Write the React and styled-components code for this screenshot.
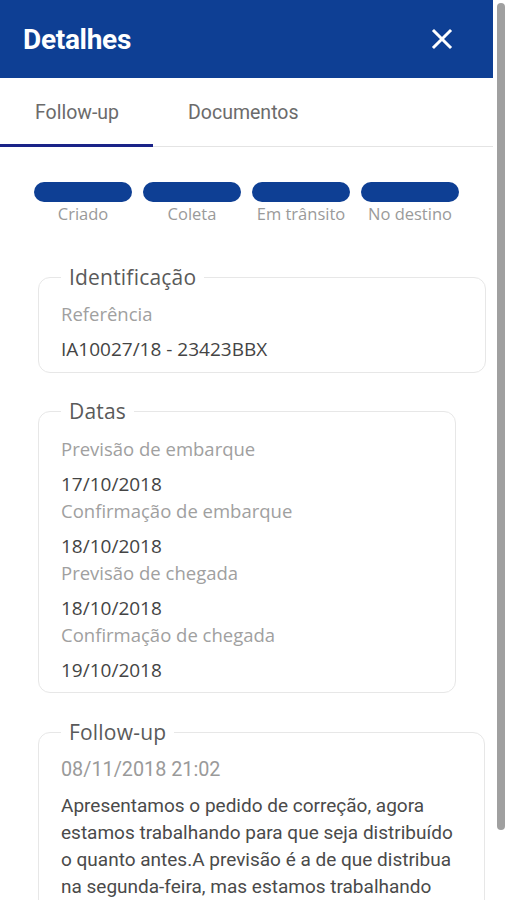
import styled, { createGlobalStyle } from 'styled-components'

// cores da tela de detalhes
const BLUE = '#0e3f94'
const NAVY = '#1a2388'

const GlobalStyle = createGlobalStyle`
  html, body {
    margin: 0;
    padding: 0;
    background: #ffffff;
  }
  * { box-sizing: border-box; }
`

// o painel inteiro: coluna de conteúdo + trilho da barra de rolagem
const Frame = styled.div`
  display: flex;
  height: 100vh;
  overflow: hidden;
  background: #fff;
  font-family: Roboto, "Liberation Sans", sans-serif;
`

const Panel = styled.div`
  width: 493px;
  flex: none;
  overflow: hidden;
`

const ScrollRail = styled.div`
  width: 17px;
  flex: none;
  padding: 3px 5px 0 4px;
`

const ScrollThumb = styled.div`
  height: 827px;
  border-radius: 4px;
  background: #a0a0a0;
`

const Header = styled.header`
  height: 78px;
  background: ${BLUE};
  display: flex;
  align-items: center;
  justify-content: space-between;
  padding: 0 39px 0 23px;
`

const Title = styled.h1`
  margin: 0;
  color: #fff;
  font-size: 28px;
  font-weight: 700;
  letter-spacing: -0.3px;
`

const CloseButton = styled.button`
  border: 0;
  background: none;
  padding: 0;
  width: 24px;
  height: 24px;
  display: flex;
  align-items: center;
  justify-content: center;
  cursor: pointer;
`

const Tabs = styled.nav`
  display: flex;
  height: 69px;
  border-bottom: 1px solid #e4e4e4;
`

const Tab = styled.div`
  display: flex;
  align-items: center;
  padding: 2px 34px 0 35px;
  font-size: 19.5px;
  color: #6b6b6b;
  border-bottom: 3px solid ${(p) => (p.$active ? NAVY : 'transparent')};
  margin-bottom: -1px;
`

const Content = styled.main`
  padding: 35px 0 0 0;
`

const Steps = styled.div`
  display: grid;
  grid-template-columns: repeat(4, 98px);
  column-gap: 11px;
  margin-left: 34px;
`

const Step = styled.div`
  display: flex;
  flex-direction: column;
  align-items: center;
  gap: 2px;
`

const StepBar = styled.div`
  width: 100%;
  height: 20px;
  border-radius: 10px;
  background: ${(p) => (p.$done ? BLUE : '#d6d6d6')};
`

const StepLabel = styled.span`
  font-family: "Open Sans", sans-serif;
  font-size: 16.5px;
  line-height: 20px;
  color: #9a9a9a;
  white-space: nowrap;
`

const Box = styled.fieldset`
  margin: ${(p) => p.$top}px 0 0 38px;
  width: ${(p) => p.$width}px;
  border: 1px solid #e7e7e7;
  border-radius: 12px;
  padding: 0 22px ${(p) => p.$bottom}px 22px;
`

const Legend = styled.legend`
  padding: 0 8px;
  font-family: "Open Sans", sans-serif;
  font-size: 21px;
  line-height: 26px;
  color: #5a5a5a;
  letter-spacing: 0.2px;
`

const Label = styled.div`
  font-family: "Open Sans", sans-serif;
  font-size: 18.5px;
  line-height: 24px;
  color: #a0a0a0;
  margin-top: ${(p) => p.$gap}px;
`

const Value = styled.div`
  font-family: "Open Sans", sans-serif;
  font-size: 19px;
  line-height: 22px;
  color: #444;
  margin-top: 12px;
`

const Stamp = styled.div`
  font-size: 19.8px;
  line-height: 24px;
  color: #9a9a9a;
  margin-top: 13px;
`

const Message = styled.p`
  margin: 10px 0 0;
  font-family: Roboto, "Liberation Sans", sans-serif;
  font-size: 19px;
  line-height: 27px;
  color: #4a4a4a;
`

const steps = ['Criado', 'Coleta', 'Em trânsito', 'No destino']

const dates = [
  ['Previsão de embarque', '17/10/2018'],
  ['Confirmação de embarque', '18/10/2018'],
  ['Previsão de chegada', '18/10/2018'],
  ['Confirmação de chegada', '19/10/2018'],
]

export default function App() {
  return (
    <>
      <GlobalStyle />
      <Frame>
        <Panel>
          <Header>
            <Title>Detalhes</Title>
            <CloseButton aria-label="Fechar">
              <svg width="22" height="22" viewBox="0 0 22 22">
                <path d="M3 3 L19 19 M19 3 L3 19" stroke="#fff" strokeWidth="3" strokeLinecap="square" />
              </svg>
            </CloseButton>
          </Header>

          <Tabs>
            <Tab $active>Follow-up</Tab>
            <Tab>Documentos</Tab>
          </Tabs>

          <Content>
            <Steps>
              {steps.map((s) => (
                <Step key={s}>
                  <StepBar $done />
                  <StepLabel>{s}</StepLabel>
                </Step>
              ))}
            </Steps>

            <Box $top={40} $width={448} $bottom={12}>
              <Legend>Identificação</Legend>
              <Label $gap={12}>Referência</Label>
              <Value>IA10027/18 - 23423BBX</Value>
            </Box>

            <Box $top={25} $width={418} $bottom={11}>
              <Legend>Datas</Legend>
              {dates.map(([label, value], i) => (
                <div key={label}>
                  <Label $gap={i === 0 ? 13 : 4}>{label}</Label>
                  <Value>{value}</Value>
                </div>
              ))}
            </Box>

            <Box $top={26} $width={447} $bottom={11}>
              <Legend>Follow-up</Legend>
              <Stamp>08/11/2018 21:02</Stamp>
              <Message>
                Apresentamos o pedido de correção, agora estamos trabalhando para que seja
                distribuído o quanto antes.A previsão é a de que distribua na segunda-feira, mas
                estamos trabalhando
              </Message>
            </Box>
          </Content>
        </Panel>
        <ScrollRail>
          <ScrollThumb />
        </ScrollRail>
      </Frame>
    </>
  )
}
